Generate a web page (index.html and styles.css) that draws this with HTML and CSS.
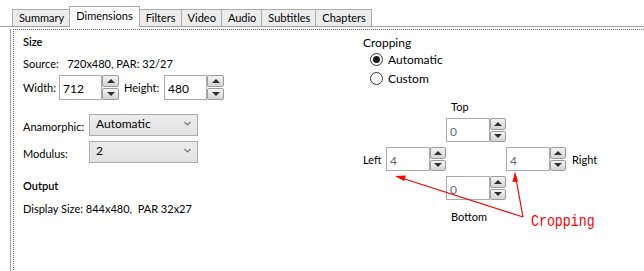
FILE: index.html
```html
<!DOCTYPE html>
<html lang="en">
  <head>
    <meta charset="UTF-8" />
    <title>Dimensions</title>
    <link rel="stylesheet" href="styles.css">
  </head>
  <body>
    <div class="tabs">
      <div class="tab">Summary</div>
      <div class="tab active">Dimensions</div>
      <div class="tab">Filters</div>
      <div class="tab">Video</div>
      <div class="tab">Audio</div>
      <div class="tab">Subtitles</div>
      <div class="tab">Chapters</div>
    </div>

    <div class="panel">
      <div class="focus">
        <!-- left column: size -->
        <div class="col-left">
          <div class="heading">Size</div>
          <div class="source">Source:&nbsp;&nbsp; 720x480, PAR: 32/27</div>
          <div class="size-row">
            <span class="lbl-width">Width:</span>
            <div class="spin big">
              <div class="spin-input">712</div>
              <div class="spin-btns"><div class="btn up"></div><div class="btn down"></div></div>
            </div>
            <span class="lbl-height">Height:</span>
            <div class="spin big">
              <div class="spin-input">480</div>
              <div class="spin-btns"><div class="btn up"></div><div class="btn down"></div></div>
            </div>
          </div>
          <div class="combo-row first">
            <span class="combo-lbl">Anamorphic:</span>
            <div class="combo">Automatic<svg class="chev" width="7" height="5" viewBox="0 0 7 5"><polyline points="0.5,1 3.5,4 6.5,1" fill="none" stroke="#777" stroke-width="1.2"/></svg></div>
          </div>
          <div class="combo-row">
            <span class="combo-lbl">Modulus:</span>
            <div class="combo">2<svg class="chev" width="7" height="5" viewBox="0 0 7 5"><polyline points="0.5,1 3.5,4 6.5,1" fill="none" stroke="#777" stroke-width="1.2"/></svg></div>
          </div>
          <div class="heading out">Output</div>
          <div class="display">Display Size: 844x480,&nbsp; PAR 32x27</div>
        </div>

        <!-- right column: cropping -->
        <div class="col-right">
          <div class="crop-title">Cropping</div>
          <div class="radio-row"><span class="radio on"></span>Automatic</div>
          <div class="radio-row"><span class="radio"></span>Custom</div>

          <div class="crop-grid">
            <div class="crop-lbl top">Top</div>
            <div class="spin small c-top">
              <div class="spin-input val">0</div>
              <div class="spin-btns"><div class="btn up"></div><div class="btn down"></div></div>
            </div>
            <div class="crop-lbl left">Left</div>
            <div class="spin small c-left">
              <div class="spin-input val">4</div>
              <div class="spin-btns"><div class="btn up"></div><div class="btn down"></div></div>
            </div>
            <div class="spin small c-right">
              <div class="spin-input val">4</div>
              <div class="spin-btns"><div class="btn up"></div><div class="btn down"></div></div>
            </div>
            <div class="crop-lbl right">Right</div>
            <div class="spin small c-bottom">
              <div class="spin-input val">0</div>
              <div class="spin-btns"><div class="btn up"></div><div class="btn down"></div></div>
            </div>
            <div class="crop-lbl bottom">Bottom</div>
          </div>
        </div>
      </div>
    </div>

    <!-- red annotation drawn over the screenshot -->
    <svg class="arrows" width="644" height="271" viewBox="0 0 644 271">
      <g stroke="#f00" stroke-width="1.2" fill="none">
        <line x1="523" y1="217" x2="400" y2="177.5"/>
        <line x1="523" y1="217" x2="515.5" y2="176"/>
      </g>
      <g fill="#f00">
        <polygon points="395,176 406,175.5 404,181"/>
        <polygon points="515,171.5 512.5,182 518,181.5"/>
      </g>
    </svg>
    <div class="note">Cropping</div>
  </body>
</html>
```
FILE: styles.css
```css
body {
  margin: 0;
  width: 644px;
  height: 271px;
  overflow: hidden;
  background: #fff;
  font-family: "Segoe UI", Lato, "Noto Sans", sans-serif;
  font-size: 11px;
  color: #000;
  position: relative;
}

/* tab strip */
.tabs {
  display: flex;
  align-items: flex-end;
  height: 27px;
  padding-left: 12px;
  border-bottom: 1px solid #a0a0a0;
  box-sizing: border-box;
}
.tab {
  height: 17px;
  line-height: 16px;
  padding: 0 5px 0 6px;
  background: #ececec;
  border: 1px solid #acacac;
  border-bottom: none;
  margin-left: -1px;
  box-sizing: border-box;
}
.tab:first-child {
  margin-left: 0;
}
.tab.active {
  height: 21px;
  margin-bottom: -1px;
  line-height: 17px;
  padding: 0 6px;
  background: #fff;
  position: relative;
  z-index: 1;
}

/* page body */
.panel {
  margin-left: 10px;
  height: 244px;
  border-left: 1px solid #a0a0a0;
}
.focus {
  margin: 2px 0 0 2px;
  height: 240px;
  border-top: 1px dotted #6a6a6a;
  border-left: 1px dotted #6a6a6a;
  display: flex;
}

.col-left {
  width: 340px;
  padding: 4px 0 0 9px;
  box-sizing: border-box;
}
.heading {
  font-weight: 600;
  line-height: 16px;
}
.source {
  margin-top: 6px;
  line-height: 16px;
}
.size-row {
  display: flex;
  align-items: center;
  margin-top: 3px;
}
.lbl-width {
  width: 36px;
}
.lbl-height {
  width: 40px;
  margin-left: 5px;
}

/* spin boxes */
.spin {
  display: flex;
}
.spin-input {
  border: 1px solid #ababab;
  box-sizing: border-box;
  padding-left: 3px;
  display: flex;
  align-items: center;
  padding-top: 2px;
}
.spin.big .spin-input {
  width: 43px;
  height: 25px;
  font-size: 12px;
}
.spin.small .spin-input {
  width: 44px;
  height: 24px;
  font-size: 12px;
}
.spin-input.val {
  color: #5e6b7a;
}
.spin-btns {
  display: flex;
  flex-direction: column;
  gap: 1px;
}
.spin.big .spin-btns {
  width: 17px;
}
.spin.small .spin-btns {
  width: 16px;
}
.btn {
  flex: 1;
  border: 1px solid #9c9c9c;
  border-radius: 2px;
  background: linear-gradient(#f4f4f4, #d4d4d4);
  position: relative;
}
.btn::after {
  content: "";
  position: absolute;
  left: 50%;
  top: 50%;
  margin-left: -4px;
  border-left: 4px solid transparent;
  border-right: 4px solid transparent;
}
.btn.up::after {
  margin-top: -2px;
  border-bottom: 4px solid #2e2e2e;
}
.btn.down::after {
  margin-top: -2px;
  border-top: 4px solid #2e2e2e;
}

/* combo boxes */
.combo-row {
  display: flex;
  align-items: center;
  margin-top: 5px;
}
.combo-row.first {
  margin-top: 14px;
}
.combo-lbl {
  width: 66px;
  padding-top: 2px;
}
.combo {
  width: 109px;
  height: 22px;
  box-sizing: border-box;
  border: 1px solid #adadad;
  background: linear-gradient(#ececec, #e2e2e2);
  padding: 0 0 3px 6px;
  font-size: 12px;
  display: flex;
  align-items: center;
  justify-content: space-between;
}
.chev {
  margin-right: 6px;
}
.heading.out {
  margin-top: 15px;
}
.display {
  margin-top: 7px;
  line-height: 16px;
}

/* cropping */
.col-right {
  padding: 5px 0 0 9px;
}
.crop-title {
  line-height: 16px;
  font-size: 12px;
}
.radio-row {
  display: flex;
  align-items: center;
  margin-left: 7px;
  margin-top: -1px;
  height: 19px;
  font-size: 12px;
}
.radio-row + .radio-row {
  margin-top: 0;
}
.radio {
  width: 13px;
  height: 13px;
  box-sizing: border-box;
  border: 1px solid #333;
  border-radius: 50%;
  margin-right: 5px;
  display: flex;
  align-items: center;
  justify-content: center;
}
.radio.on::after {
  content: "";
  width: 7px;
  height: 7px;
  border-radius: 50%;
  background: #1a1a1a;
}

.crop-grid {
  display: grid;
  grid-template-columns: 23px 60px 60px 60px 6px auto;
  grid-template-rows: 16px 24px 24px 24px 16px;
  row-gap: 5px;
  margin-top: 9px;
  align-items: center;
}
.crop-lbl.top {
  grid-column: 3;
  grid-row: 1;
  padding-left: 5px;
  margin-top: 3px;
}
.c-top {
  grid-column: 3;
  grid-row: 2;
}
.crop-lbl.left {
  grid-column: 1;
  grid-row: 3;
}
.c-left {
  grid-column: 2;
  grid-row: 3;
}
.c-right {
  grid-column: 4;
  grid-row: 3;
}
.crop-lbl.right {
  grid-column: 6;
  grid-row: 3;
}
.c-bottom {
  grid-column: 3;
  grid-row: 4;
}
.crop-lbl.bottom {
  grid-column: 3;
  grid-row: 5;
  padding-left: 5px;
  margin-top: 7px;
}

/* annotation overlay */
.arrows {
  position: absolute;
  left: 0;
  top: 0;
}
.note {
  position: absolute;
  left: 531px;
  top: 212px;
  color: #f00;
  font-family: "Liberation Mono", "DejaVu Sans Mono", monospace;
  font-size: 17px;
  transform: scaleX(0.78);
  transform-origin: left;
}
```
